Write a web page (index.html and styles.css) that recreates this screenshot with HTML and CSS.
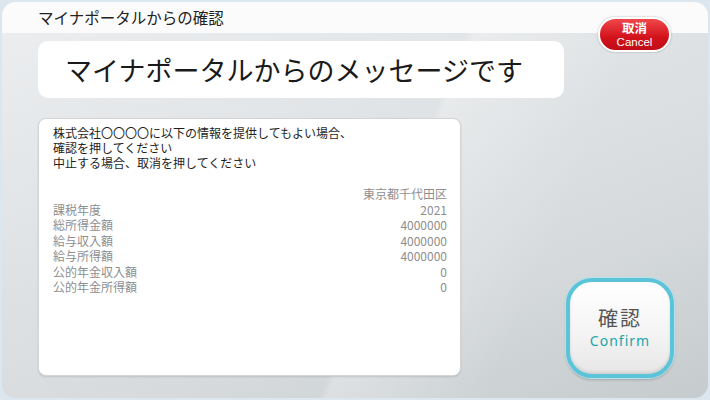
FILE: index.html
```html
<!DOCTYPE html>
<html lang="ja">
<head>
    <meta charset="UTF-8">
    <title>マイナポータルからの確認</title>
    <link rel="stylesheet" href="styles.css">
</head>
<body>
<div class="screen">
    <div class="header">マイナポータルからの確認</div>
    <div class="cancel">
        <span class="cancel-jp">取消</span>
        <span class="cancel-en">Cancel</span>
    </div>
    <div class="message">マイナポータルからのメッセージです</div>
    <div class="main">
        <div class="card">
            <p class="notice">株式会社〇〇〇〇に以下の情報を提供してもよい場合、<br>確認を押してください<br>中止する場合、取消を押してください</p>
            <div class="data">
                <div class="row"><span></span><span>東京都千代田区</span></div>
                <div class="row"><span>課税年度</span><span>2021</span></div>
                <div class="row"><span>総所得金額</span><span>4000000</span></div>
                <div class="row"><span>給与収入額</span><span>4000000</span></div>
                <div class="row"><span>給与所得額</span><span>4000000</span></div>
                <div class="row"><span>公的年金収入額</span><span>0</span></div>
                <div class="row"><span>公的年金所得額</span><span>0</span></div>
            </div>
        </div>
        <div class="confirm">
            <span class="confirm-jp">確認</span>
            <span class="confirm-en">Confirm</span>
        </div>
    </div>
</div>
</body>
</html>
```

FILE: styles.css
```css
* {
    margin: 0;
    padding: 0;
    box-sizing: border-box;
}

body {
    background-color: #dbe6ee;
    font-family: "Noto Sans CJK JP", "Noto Sans", sans-serif;
    width: 710px;
    height: 400px;
    overflow: hidden;
}

.screen {
    position: relative;
    width: 706px;
    height: 396px;
    margin: 2px;
    border-radius: 14px;
    overflow: hidden;
    display: flex;
    flex-direction: column;
    background:
        linear-gradient(112deg, transparent 55%, rgba(255, 255, 255, .25) 56%, transparent 75%),
        linear-gradient(160deg, #eceef0 0%, #e0e3e5 40%, #d6dadd 70%, #c6cbce 100%);
}

.header {
    height: 31px;
    flex-shrink: 0;
    padding-left: 36px;
    background-color: #fbfbfb;
    color: #222;
    font-size: 15.5px;
    line-height: 30px;
}

.cancel {
    position: absolute;
    top: 15px;
    right: 37px;
    width: 73px;
    height: 35px;
    border: 2px solid #fff;
    border-radius: 18px;
    background: linear-gradient(#f0474b, #d2121b 60%, #c10d16);
    box-shadow: 0 0 2px rgba(0, 0, 0, .35);
    display: flex;
    flex-direction: column;
    align-items: center;
    justify-content: center;
    color: #fff;
}

.cancel-jp {
    font-size: 12.5px;
    font-weight: bold;
    line-height: 16px;
}

.cancel-en {
    font-family: "Liberation Sans", sans-serif;
    font-size: 11.5px;
    line-height: 13px;
}

.message {
    width: 526px;
    height: 57px;
    margin: 8px 0 0 36px;
    padding-left: 27px;
    border-radius: 10px;
    background-color: #fff;
    color: #1a1a1a;
    font-size: 27px;
    line-height: 57px;
    white-space: nowrap;
}

.main {
    display: flex;
    align-items: flex-end;
    margin: 20px 0 0 36px;
}

.card {
    width: 423px;
    height: 258px;
    padding: 6px 13px 0 14px;
    border: 1px solid #d4d4d4;
    border-radius: 8px;
    background-color: #fff;
    box-shadow: 0 1px 2px rgba(0, 0, 0, .12);
}

.notice {
    color: #1e1e1e;
    font-size: 12px;
    line-height: 15px;
}

.data {
    margin-top: 16px;
    color: #8e8e8e;
    font-size: 12px;
    line-height: 15.5px;
}

.row {
    display: flex;
    justify-content: space-between;
}

.confirm {
    width: 108px;
    height: 100px;
    margin: 0 0 -2px 105px;
    border: 4px solid #5cc4d8;
    border-radius: 26px;
    background: linear-gradient(#ffffff, #f3f3f3 60%, #e6e6e6);
    box-shadow: 0 0 0 1px #b5e1eb, 0 2px 3px rgba(0, 0, 0, .2), inset 0 -2px 3px rgba(0, 0, 0, .1);
    display: flex;
    flex-direction: column;
    align-items: center;
    justify-content: center;
}

.confirm-jp {
    color: #555;
    font-size: 20px;
    line-height: 26px;
    letter-spacing: 2px;
}

.confirm-en {
    color: #20a6ab;
    font-family: "Noto Sans", sans-serif;
    font-size: 14px;
    line-height: 20px;
    letter-spacing: 1px;
}
```
